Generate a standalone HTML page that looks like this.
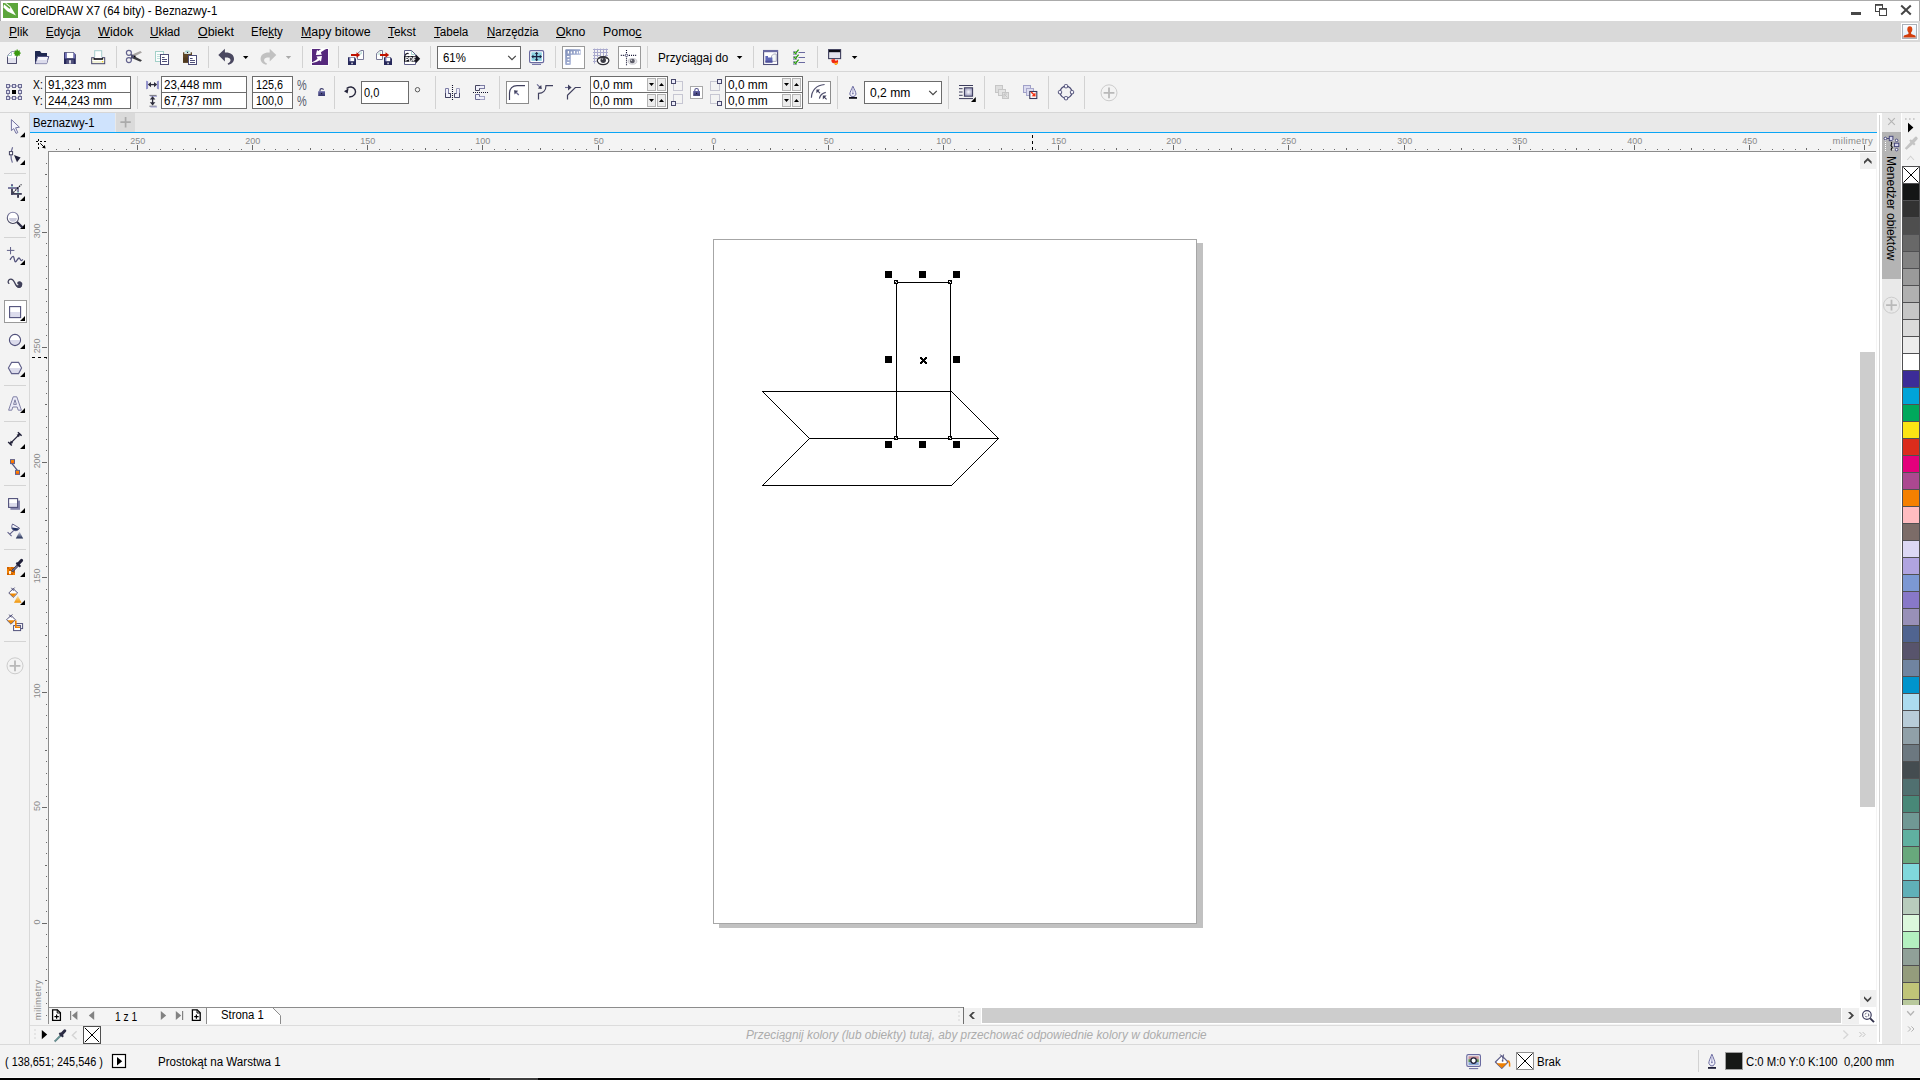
<!DOCTYPE html>
<html>
<head>
<meta charset="utf-8">
<title>CorelDRAW X7</title>
<style>
html,body{margin:0;padding:0;}
body{width:1920px;height:1080px;overflow:hidden;background:#f3f3f3;font-family:"Liberation Sans",sans-serif;font-size:12px;color:#000;}
#root{position:absolute;left:0;top:0;width:1920px;height:1080px;overflow:hidden;background:#f3f3f3;}
.a{position:absolute;}
.t{position:absolute;white-space:nowrap;line-height:16px;height:16px;transform-origin:0 0;}
.box{position:absolute;background:#fff;border:1px solid #7a7a7a;box-sizing:border-box;}
.vs{position:absolute;width:1px;background:#d2d2d2;}
.hs{position:absolute;height:1px;background:#d2d2d2;}
svg{position:absolute;overflow:visible;}
.rl{font-size:9px;line-height:14px;height:14px;color:#8a8a8a;letter-spacing:-0.1px;}
u{text-decoration:underline;text-decoration-thickness:1px;text-underline-offset:1px;}
</style>
</head>
<body>
<div id="root">
<!-- ===== TITLE BAR ===== -->
<div class="a" style="left:0;top:0;width:1920px;height:21px;background:#fff;"></div>
<div class="a" style="left:0;top:0;width:1920px;height:1px;background:#ababab;"></div>
<div class="a" style="left:0;top:0;width:1px;height:21px;background:#a8a8a8;"></div>
<!-- ===== MENU BAR ===== -->
<div class="a" style="left:0;top:21px;width:1920px;height:21px;background:#d9d9d9;"></div>
<!-- ===== STANDARD TOOLBAR ===== -->
<div class="a" style="left:0;top:42px;width:1920px;height:29px;background:#f3f3f3;"></div>
<div class="hs" style="left:0;top:71px;width:1920px;background:#d6d6d6;"></div>
<!-- ===== PROPERTY BAR ===== -->
<div class="a" style="left:0;top:72px;width:1920px;height:40px;background:#f3f3f3;"></div>
<div class="hs" style="left:0;top:112px;width:1920px;background:#d6d6d6;"></div>
<!-- ===== TOOLBOX ===== -->
<div class="a" style="left:0;top:113px;width:29px;height:931px;background:#f3f3f3;"></div>
<div class="vs" style="left:29px;top:113px;height:931px;background:#d8d8d8;"></div>
<!-- ===== TAB BAR ===== -->
<div class="a" style="left:30px;top:113px;width:1847px;height:19px;background:#e9e9e9;"></div>
<div class="a" style="left:30px;top:113px;width:85px;height:19px;background:#cfe3fd;"></div>
<div class="a" style="left:116px;top:113px;width:19px;height:19px;background:#dadada;"></div>
<div class="a" style="left:30px;top:132px;width:1847px;height:1px;background:#0aa5f5;"></div>
<!-- ===== RULER BG ===== -->
<div class="a" style="left:30px;top:133px;width:1847px;height:892px;background:#f4f4f4;"></div>
<!-- title bar icons -->
<div class="a" style="left:1919px;top:1px;width:1px;height:20px;background:#a8a8a8;"></div>
<svg style="left:3px;top:3px;" width="15" height="15" viewBox="0 0 15 15">
<rect x="0" y="0" width="15" height="15" fill="#5ba53b"/>
<path d="M1.2 0.6 L3.6 0.3 L7.6 3.4 L13 12.6 L4.6 8.6 L0.4 4.4 Z" fill="#fff"/>
<path d="M1.6 0.9 L6.6 4.9" stroke="#5ba53b" stroke-width="1.5" fill="none" stroke-linecap="round"/>
</svg>
<div class="a" style="left:1851px;top:12px;width:10px;height:3px;background:#474747;"></div>
<svg style="left:1870px;top:0px;" width="50" height="21" viewBox="1870 0 50 21">
<g fill="#fff" stroke="#444" stroke-width="1">
<rect x="1875.5" y="5" width="7" height="6.5"/><rect x="1875" y="4" width="8" height="1.6" fill="#444" stroke="none"/>
<rect x="1879.5" y="9" width="7" height="6.5"/><rect x="1879" y="8" width="8" height="1.6" fill="#444" stroke="none"/>
</g>
<path d="M1901.2 5.4 L1910.8 14.4 M1910.8 5.4 L1901.2 14.4" stroke="#444" stroke-width="2" fill="none"/>
</svg>
<!-- user icon -->
<div class="a" style="left:1901px;top:23px;width:17px;height:17px;background:#fff;"></div>
<svg style="left:1902px;top:24px;" width="15" height="15" viewBox="0 0 15 15">
<defs><linearGradient id="ug" x1="0" y1="0" x2="0" y2="1"><stop offset="0" stop-color="#fdfdff"/><stop offset="1" stop-color="#dcecfa"/></linearGradient></defs>
<rect x="0.5" y="0.5" width="14" height="14" fill="url(#ug)" stroke="#a9b0b8" stroke-width="1"/>
<ellipse cx="7.8" cy="5.4" rx="2.5" ry="3.1" fill="#d9430f"/>
<path d="M6.6 7.5 L9 7.5 L9.2 10 L13.2 11.6 L14 13.6 L1.2 13.6 L2 11.6 L6.4 10 Z" fill="#d23d0c"/>
</svg>
<!-- ===== CANVAS ===== -->
<div class="a" style="left:48px;top:151px;width:1828px;height:857px;background:#8c8c8c;"></div>
<div class="a" style="left:49px;top:152px;width:1827px;height:855px;background:#fff;"></div>
<!-- page shadow + page -->
<div class="a" style="left:1197px;top:243px;width:6px;height:685px;background:#c1c1c1;"></div>
<div class="a" style="left:719px;top:924px;width:484px;height:4px;background:#c1c1c1;"></div>
<div class="a" style="left:713px;top:239px;width:484px;height:685px;background:#fff;border:1px solid #a6a6a6;box-sizing:border-box;"></div>
<!-- drawing -->
<svg style="left:0;top:0;" width="1920" height="1080" viewBox="0 0 1920 1080" shape-rendering="crispEdges">
<g fill="none" stroke="#000" stroke-width="1">
<path d="M762.5 391.5 L951.5 391.5 L998.5 438.5 L809.5 438.5 Z"/>
<path d="M809.5 438.5 L762.5 485.5 L951.5 485.5 L998.5 438.5"/>
<rect x="896.5" y="282.5" width="54" height="156"/>
</g>
<g fill="#000">
<rect x="885" y="271" width="7" height="7"/><rect x="919" y="271" width="7" height="7"/><rect x="953" y="271" width="7" height="7"/>
<rect x="885" y="356" width="7" height="7"/><rect x="953" y="356" width="7" height="7"/>
<rect x="885" y="441" width="7" height="7"/><rect x="919" y="441" width="7" height="7"/><rect x="953" y="441" width="7" height="7"/>
</g>
<g fill="#fff" stroke="#000" stroke-width="1">
<rect x="894.5" y="280.5" width="3" height="3"/><rect x="948.5" y="280.5" width="3" height="3"/>
<rect x="894.5" y="436.5" width="3" height="3"/><rect x="948.5" y="436.5" width="3" height="3"/>
</g>
<path d="M895 283L897 281M949 283L951 281M895 439L897 437M949 439L951 437" stroke="#000" stroke-width="0.8" shape-rendering="auto"/>
<path d="M920 357h2v1h1v1h1v-1h1v-1h2v2h-1v1h-1v1h1v1h1v2h-2v-1h-1v-1h-1v1h-1v1h-2v-2h1v-1h1v-1h-1v-1h-1z" fill="#000"/>
</svg>
<!-- ===== VERTICAL SCROLLBAR ===== -->
<div class="a" style="left:1860px;top:153px;width:16px;height:16px;background:#f0f0f0;"></div>
<div class="a" style="left:1860px;top:990px;width:16px;height:17px;background:#f0f0f0;"></div>
<div class="a" style="left:1860px;top:352px;width:15px;height:455px;background:#cdcdcd;"></div>
<!-- ===== NAV BAR / HSCROLL ===== -->
<div class="a" style="left:49px;top:1008px;width:914px;height:16px;background:#f4f4f4;"></div>
<div class="a" style="left:963px;top:1007px;width:1px;height:17px;background:#707070;"></div>
<div class="a" style="left:48px;top:1008px;width:1px;height:16px;background:#8c8c8c;"></div>
<div class="a" style="left:964px;top:1007px;width:912px;height:17px;background:#fff;"></div>
<div class="a" style="left:964px;top:1008px;width:17px;height:16px;background:#f0f0f0;"></div>
<div class="a" style="left:1842px;top:1008px;width:17px;height:16px;background:#f0f0f0;"></div>
<div class="a" style="left:982px;top:1008px;width:859px;height:15px;background:#cdcdcd;"></div>
<div class="a" style="left:30px;top:1024px;width:1847px;height:1px;background:#f4f4f4;"></div>
<div class="hs" style="left:30px;top:1025px;width:1847px;background:#dcdcdc;"></div>
<div class="a" style="left:30px;top:1026px;width:1847px;height:18px;background:#f4f4f4;"></div>
<!-- page tab -->
<svg style="left:0;top:0;" width="1920" height="1080" viewBox="0 0 1920 1080">
<path d="M206.5 1024 L206.5 1008 L273 1008 L280.5 1015.5 L280.5 1024 Z" fill="#fff" stroke="none"/>
<path d="M206.5 1024 L206.5 1007.5 M273 1008 L280.5 1015.5 L280.5 1024" fill="none" stroke="#8c8c8c" stroke-width="1"/>
</svg>
<!-- ===== STANDARD TOOLBAR ICONS ===== -->
<div class="vs" style="left:116px;top:46px;height:22px;"></div>
<div class="vs" style="left:208px;top:46px;height:22px;"></div>
<div class="vs" style="left:302px;top:46px;height:22px;"></div>
<div class="vs" style="left:338px;top:46px;height:22px;"></div>
<div class="vs" style="left:430px;top:46px;height:22px;"></div>
<div class="vs" style="left:555px;top:46px;height:22px;"></div>
<div class="vs" style="left:647px;top:46px;height:22px;"></div>
<div class="vs" style="left:753px;top:46px;height:22px;"></div>
<div class="vs" style="left:817px;top:46px;height:22px;"></div>
<div class="box" style="left:437px;top:46px;width:84px;height:23px;border-color:#6c6c6c;"></div>
<div class="box" style="left:562px;top:46px;width:23px;height:23px;border-color:#9a9a9a;"></div>
<div class="box" style="left:618px;top:46px;width:23px;height:23px;border-color:#9a9a9a;"></div>
<svg style="left:0;top:0;" width="900" height="72" viewBox="0 0 900 72">
<!-- new -->
<path d="M7.5 55.5 L11.5 51.5 L16.5 51.5 L16.5 63.5 L7.5 63.5 Z" fill="#fff" stroke="#9a9ab4" stroke-width="1"/>
<path d="M8 58 H16 V63 H8 Z" fill="#e2e2ee"/>
<path d="M7.5 57 V63.5 H16.5 V57" fill="none" stroke="#4c4c6c" stroke-width="1"/>
<path d="M8 55.5 H11.5 V52" fill="none" stroke="#a8d0cc" stroke-width="1"/>
<circle cx="17.2" cy="53.1" r="2.7" fill="#3a9a10"/>
<path d="M17.2 49.6 V56.6 M13.7 53.1 H20.7 M14.8 50.7 L19.6 55.5 M19.6 50.7 L14.8 55.5" stroke="#3a9a10" stroke-width="1.2"/>
<!-- open -->
<path d="M35 51.5 Q35 51 35.5 51 H40 L41.5 53 H47 V56 H35 Z" fill="#1f2850"/>
<path d="M35 55 H38 V64 H35 Z" fill="#1f2850"/>
<path d="M37.6 56.5 H48.8 L46.6 63.6 H35.4 Z" fill="#f4f4fa" stroke="#505080" stroke-width="1"/>
<path d="M37 60 H47.6 L46.6 63.4 H36 Z" fill="#dcdcec"/>
<!-- save -->
<path d="M64 52.3 H73.6 L75.8 54.5 V64 H64 Z" fill="#26285a"/>
<path d="M64.8 53 H66.8 V58.5 H64.8 Z M73.3 53 H74.9 V58.5 H73.3 Z" fill="#7474bc"/>
<rect x="66.8" y="52.8" width="6.5" height="5.4" fill="#fff"/>
<rect x="66.3" y="59.6" width="7.4" height="4.4" fill="#54547e"/>
<rect x="69.2" y="60.2" width="1.6" height="3.4" fill="#fff"/>
<!-- print -->
<rect x="94.7" y="50.7" width="7" height="8" fill="#fff" stroke="#a4cccc" stroke-width="1"/>
<rect x="91.7" y="57.7" width="13" height="6" fill="#f2f2d6" stroke="#45456c" stroke-width="1"/>
<rect x="93.6" y="58" width="9.3" height="1.8" fill="#10101c"/>
<rect x="94.6" y="57" width="7.2" height="1.2" fill="#fff"/>
<rect x="92.3" y="60" width="11.8" height="1" fill="#fff"/>
<rect x="102" y="61" width="1.2" height="1.2" fill="#f0d020"/>
<!-- cut -->
<path d="M131.5 58 L142 52.6 L140.4 51 L131 55 Z" fill="#a9a6a4"/>
<path d="M131.5 54.8 L142 60.2 L140.4 61.8 L131 57.8 Z" fill="#3c3c40"/>
<circle cx="128.9" cy="52.8" r="2.5" fill="none" stroke="#62628e" stroke-width="1.2"/>
<circle cx="128.9" cy="60.1" r="2.5" fill="none" stroke="#62628e" stroke-width="1.2"/>
<path d="M130.8 54.6 L134.4 56.6 M130.8 58.3 L134.4 56.2" stroke="#4c4c70" stroke-width="1.4"/>
<circle cx="134.8" cy="56.4" r="0.8" fill="#000"/>
<!-- copy -->
<rect x="155.5" y="51.5" width="8" height="10" fill="#fbfdfd" stroke="#a2d0c8" stroke-width="1"/>
<path d="M157 54.5 H162 M157 56.5 H162 M157 58.5 H162" stroke="#bfe0da" stroke-width="1"/>
<rect x="160.5" y="54.5" width="8" height="10" fill="#fff" stroke="#4e4e78" stroke-width="1"/>
<path d="M162 57.5 H164.6 M162 59.5 H167 M162 61.5 H167" stroke="#4e4e78" stroke-width="1"/>
<!-- paste -->
<rect x="183" y="52.3" width="9" height="10.4" fill="#5e4626"/>
<rect x="183" y="57.5" width="9" height="5.2" fill="#503a1e"/>
<path d="M184.4 53.6 L185.6 50.6 L189.4 50.6 L190.6 53.6 Z" fill="#a8d8d0"/>
<rect x="184.3" y="52.2" width="6.4" height="1.6" fill="#e8f4f2"/>
<circle cx="187.5" cy="52.4" r="0.7" fill="#202040"/>
<rect x="188.5" y="55.5" width="8" height="9" fill="#fff" stroke="#4e4e78" stroke-width="1"/>
<path d="M190 58.5 H192.6 M190 60.5 H195 M190 62.5 H195" stroke="#4e4e78" stroke-width="1"/>
<!-- undo -->
<path d="M218.3 55.1 L224.9 48.8 L224.9 52.6 C230 52.2 234 54.6 234 59 C234 62 231.5 64.3 228.2 64.7 L227.6 63.5 C229.8 62.8 230.9 61.3 230.4 59.6 C229.8 57.9 227.8 57.4 224.9 57.6 L224.9 61.6 Z" fill="#4a4860"/>
<path d="M243 56 H248.4 L245.7 59 Z" fill="#000"/>
<!-- redo -->
<path d="M276.3 55.1 L269.7 48.8 L269.7 52.6 C264.6 52.2 260.6 54.6 260.6 59 C260.6 62 263.1 64.3 266.4 64.7 L267 63.5 C264.8 62.8 263.7 61.3 264.2 59.6 C264.8 57.9 266.8 57.4 269.7 57.6 L269.7 61.6 Z" fill="#c1c1c1"/>
<path d="M285.8 56 H291.2 L288.5 59 Z" fill="#a9a9a9"/>
<!-- corel connect purple -->
<rect x="311" y="48" width="18" height="18" fill="#fcfcfc"/>
<rect x="312" y="49" width="16" height="16" fill="#55287c"/>
<path d="M315.9 55 L317 49.9 L318.4 50.9 C319.4 50 320.2 49.5 321.2 49.1 L326.3 49 C324 50 322.2 51.2 320.8 52.5 L321.8 54.8 Z" fill="#fff"/>
<path d="M322 56 L316.5 56.6 L317.6 58.4 C316 60.2 314.2 61.4 312 62.2 L312 63.1 C315 62.6 317.4 61.8 319.4 60.3 L321 61.6 Z" fill="#fff"/>
<!-- import -->
<path d="M357.5 53.5 L361 50.5 H363.5 V59.5 H357.5 Z" fill="#fff" stroke="#7a7a98" stroke-width="1"/>
<path d="M358.5 54 H361.2 V51.4" fill="none" stroke="#a8d4cc" stroke-width="1"/>
<path d="M348 57.3 H354.6 L356 58.7 V65 H348 Z" fill="#26285a"/>
<rect x="349.6" y="57.6" width="4.6" height="3.6" fill="#fff"/>
<rect x="349.4" y="58" width="1" height="3" fill="#7474bc"/>
<rect x="351.4" y="62.6" width="1.3" height="1.6" fill="#fff"/>
<path d="M351 54 H356.5 V52.2 L360.2 55 L356.5 57.8 V56 H351 Z" fill="#c01200"/>
<!-- export -->
<path d="M376.5 53.5 L380 50.5 H382.5 V59.5 H376.5 Z" fill="#fff" stroke="#7a7a98" stroke-width="1"/>
<path d="M377.5 54 H380.2 V51.4" fill="none" stroke="#a8d4cc" stroke-width="1"/>
<path d="M384 57.3 H390.6 L392 58.7 V65 H384 Z" fill="#26285a"/>
<rect x="385.6" y="57.6" width="4.6" height="3.6" fill="#fff"/>
<rect x="385.4" y="58" width="1" height="3" fill="#7474bc"/>
<rect x="387.4" y="62.6" width="1.3" height="1.6" fill="#fff"/>
<path d="M380 54 H385.5 V52.2 L389.2 55 L385.5 57.8 V56 H380 Z" fill="#c01200"/>
<!-- pdf -->
<path d="M404.5 50.5 H411.5 L415.5 54.5 V64.5 H404.5 Z" fill="#fff" stroke="#5c5c84" stroke-width="1"/>
<path d="M411.5 51 V54.5 H415" fill="none" stroke="#a8d4cc" stroke-width="1"/>
<path d="M404 56 H416 V54.4 L420.2 58.8 L416 63.2 V61.8 H404 Z" fill="#14141e"/>
<path d="M405 55.6 C405.6 53.8 407 53.2 408.6 53.6" fill="none" stroke="#14141e" stroke-width="1.2"/>
<path d="M405.9 61.3 V57.3 H407.3 Q408.4 57.3 408.4 58.4 Q408.4 59.5 407.3 59.5 H405.9 M409.7 57.3 V61.3 H410.8 Q412.3 61.3 412.3 59.3 Q412.3 57.3 410.8 57.3 Z M413.7 61.3 V57.3 H415.7 M413.7 59.3 H415.3" fill="none" stroke="#fff" stroke-width="1.1"/>
<!-- zoom chevron -->
<path d="M508.2 55.8 L512 59.6 L515.8 55.8" fill="none" stroke="#444" stroke-width="1.2"/>
<!-- full screen -->
<rect x="529.6" y="50.6" width="14" height="12" rx="1.4" fill="#fff" stroke="#6a6aa0" stroke-width="1.2"/>
<rect x="531.4" y="52.3" width="10.4" height="8.6" fill="#8cd2e2"/>
<path d="M532 56.6 H541.2 M536.6 52.6 V60.6" stroke="#1c2040" stroke-width="1.3"/>
<path d="M536.6 51.9 L538.4 54 H534.8 Z M536.6 61.3 L538.4 59.2 H534.8 Z M531.3 56.6 L533.4 54.8 V58.4 Z M541.9 56.6 L539.8 54.8 V58.4 Z" fill="#1c2040"/>
<path d="M532 64.4 H541" stroke="#7070a4" stroke-width="1.1"/>
<!-- rulers -->
<defs><linearGradient id="rg" x1="0" y1="0" x2="1" y2="1"><stop offset="0" stop-color="#7c8cb6"/><stop offset="0.6" stop-color="#a4b0d4"/><stop offset="1" stop-color="#c4cce6"/></linearGradient></defs>
<path d="M565.2 50.2 Q565.2 49.3 566.2 49.3 H579.8 Q580.7 49.3 580.7 50.2 V54.8 H570.8 V64 Q570.8 64.9 569.9 64.9 H566.2 Q565.2 64.9 565.2 64 Z" fill="url(#rg)"/>
<path d="M568.4 51 V53.6 M571.4 51.6 V53.6 M574.4 51 V53.6 M577.4 51.6 V53.6 M579.6 51 V53.6" stroke="#fff" stroke-width="1.3"/>
<path d="M567 56.6 H569.4 M567.6 59.6 H569.4 M567 62.6 H569.4" stroke="#fff" stroke-width="1.3"/>
<!-- grid eye -->
<path d="M594.5 48.6 V63.6 M597.5 48.6 V57.4 M600.5 48.6 V56.4 M603.5 48.6 V56 M606.5 48.6 V56.4 M593 49.5 H608 M593 52.5 H608 M593 55.5 H600 M605 55.5 H608 M593 58.5 H597 M593 61.5 H596.6" stroke="#aaaace" stroke-width="1"/>
<ellipse cx="603.1" cy="60.6" rx="5.8" ry="4" fill="#fafafa" stroke="#2a2a32" stroke-width="1.2"/>
<path d="M597.3 60 C598.4 57.2 600.6 56.2 603.1 56.2 C605.6 56.2 607.8 57.2 608.9 60 C607 58.4 605 58 603.1 58 C601.2 58 599.2 58.4 597.3 60 Z" fill="#34343c"/>
<circle cx="603.2" cy="60.2" r="2.7" fill="#3c3c46"/>
<path d="M601.4 58.6 H603.4 L602.4 60 Z" fill="#ececec"/>
<!-- guide eye -->
<path d="M626.5 50 V65.4" stroke="#101030" stroke-width="1.1" stroke-dasharray="1 1.05"/>
<path d="M620.8 55.4 H636.6" stroke="#101030" stroke-width="1.1" stroke-dasharray="1 1.05"/>
<rect x="625.4" y="54.3" width="2.2" height="2.2" fill="#fff" stroke="#34345c" stroke-width="0.8" transform="rotate(45 626.5 55.4)"/>
<ellipse cx="632.5" cy="61.3" rx="4.3" ry="2.9" fill="#e6e6ea" stroke="#c0c0c8" stroke-width="0.8"/>
<ellipse cx="632.3" cy="61" rx="2.5" ry="2.2" fill="#5c5c68"/>
<circle cx="631.4" cy="60.3" r="0.8" fill="#d8d8dc"/>
<!-- snap dropdown -->
<path d="M736.8 56 H742.4 L739.6 59.1 Z" fill="#000"/>
<!-- welcome screen -->
<rect x="763.6" y="50.5" width="14" height="14" fill="#fff" stroke="#4e4e78" stroke-width="1.1"/>
<rect x="763.2" y="50" width="14.8" height="2.2" fill="#6a6aa2"/>
<path d="M771.5 56 L773.5 54 H776.3 V61.4 H771.5 Z" fill="#f4f8f8" stroke="#9a9ab4" stroke-width="0.8"/>
<path d="M765.4 56 H768 V57.6 H772.4 V62.6 H765.4 Z" fill="#6068b8"/>
<rect x="765.4" y="60.6" width="7" height="2" fill="#505098"/>
<!-- options -->
<g stroke="#6a6aa0" stroke-width="1" fill="#fff">
<rect x="793.5" y="51.5" width="3" height="3" stroke="#a4a4c0"/><rect x="793.5" y="56.5" width="3" height="3" stroke="#a4a4c0"/><rect x="793.5" y="61.5" width="3" height="3" stroke="#a4a4c0"/>
<path d="M798.5 52.5 H805 M798.5 57.5 H805 M798.5 62.5 H805" fill="none"/>
</g>
<path d="M794 52 L795.4 53.6 L798.6 49.6 M794 57 L795.4 58.6 L798.6 54.6 M794 62 L795.4 63.6 L798.6 59.6" stroke="#2ea010" stroke-width="1.3" fill="none"/>
<!-- launcher -->
<rect x="828.6" y="49.6" width="12" height="9" fill="#e2e2ea" stroke="#40405e" stroke-width="1.1"/>
<rect x="829" y="50" width="11.2" height="2.2" fill="#0c0c14"/>
<path d="M831.4 59.4 C831 62 832.6 63.6 834.6 63 C834.2 64 834.8 64.8 835.8 64.9 C838 64.4 838.8 62 837.6 59.4 C837 60.6 836 61 835.2 60.6 C834.6 60 834.8 59.4 835 59 Z" fill="#f02810"/>
<path d="M834.4 62.6 C834.6 64 835.2 64.9 836.2 64.9 C837.4 64.4 837.8 63.2 837.6 62 C836.6 63 835.4 63.2 834.4 62.6 Z" fill="#ffc020"/>
<path d="M851.8 56 H857.4 L854.6 59.1 Z" fill="#000"/>
</svg>
<!-- ===== PROPERTY BAR ===== -->
<div class="vs" style="left:137px;top:76px;height:33px;"></div>
<div class="vs" style="left:334px;top:76px;height:33px;"></div>
<div class="vs" style="left:435px;top:76px;height:33px;"></div>
<div class="vs" style="left:499px;top:76px;height:33px;"></div>
<div class="vs" style="left:837px;top:76px;height:33px;"></div>
<div class="vs" style="left:948px;top:76px;height:33px;"></div>
<div class="vs" style="left:984px;top:76px;height:33px;"></div>
<div class="vs" style="left:1048px;top:76px;height:33px;"></div>
<div class="vs" style="left:1084px;top:76px;height:33px;"></div>
<div class="box" style="left:45px;top:76px;width:86px;height:17px;border-color:#6c6c6c;"></div>
<div class="box" style="left:45px;top:92px;width:86px;height:17px;border-color:#6c6c6c;"></div>
<div class="box" style="left:161px;top:76px;width:86px;height:17px;border-color:#6c6c6c;"></div>
<div class="box" style="left:161px;top:92px;width:86px;height:17px;border-color:#6c6c6c;"></div>
<div class="box" style="left:252px;top:76px;width:41px;height:17px;border-color:#6c6c6c;"></div>
<div class="box" style="left:252px;top:92px;width:41px;height:17px;border-color:#6c6c6c;"></div>
<div class="box" style="left:361px;top:81px;width:48px;height:23px;border-color:#6c6c6c;"></div>
<div class="box" style="left:506px;top:81px;width:23px;height:23px;border-color:#8c8c8c;"></div>
<div class="box" style="left:590px;top:76px;width:78px;height:17px;border-color:#6c6c6c;"></div>
<div class="box" style="left:590px;top:92px;width:78px;height:17px;border-color:#6c6c6c;"></div>
<div class="box" style="left:725px;top:76px;width:78px;height:17px;border-color:#6c6c6c;"></div>
<div class="box" style="left:725px;top:92px;width:78px;height:17px;border-color:#6c6c6c;"></div>
<div class="box" style="left:690px;top:86px;width:13px;height:13px;border-color:#a8a8a8;"></div>
<div class="box" style="left:808px;top:81px;width:23px;height:23px;border-color:#8c8c8c;"></div>
<div class="box" style="left:864px;top:81px;width:78px;height:23px;border-color:#6c6c6c;"></div>
<!-- spin buttons -->
<div class="box" style="left:647px;top:78px;width:9px;height:13px;background:#ececec;border-color:#b4b4b4;"></div>
<div class="box" style="left:657px;top:78px;width:9px;height:13px;background:#ececec;border-color:#b4b4b4;"></div>
<div class="box" style="left:647px;top:94px;width:9px;height:13px;background:#ececec;border-color:#b4b4b4;"></div>
<div class="box" style="left:657px;top:94px;width:9px;height:13px;background:#ececec;border-color:#b4b4b4;"></div>
<div class="box" style="left:782px;top:78px;width:9px;height:13px;background:#ececec;border-color:#b4b4b4;"></div>
<div class="box" style="left:792px;top:78px;width:9px;height:13px;background:#ececec;border-color:#b4b4b4;"></div>
<div class="box" style="left:782px;top:94px;width:9px;height:13px;background:#ececec;border-color:#b4b4b4;"></div>
<div class="box" style="left:792px;top:94px;width:9px;height:13px;background:#ececec;border-color:#b4b4b4;"></div>
<svg style="left:0;top:72px;" width="1130" height="41" viewBox="0 72 1130 41">
<!-- origin grid -->
<g fill="#dedef0" stroke="#6c6c94" stroke-width="1">
<path d="M8 86 H20 V98 H8 Z" fill="none"/>
<rect x="6.5" y="84.5" width="3" height="3"/><rect x="12.5" y="84.5" width="3" height="3"/><rect x="18.5" y="84.5" width="3" height="3"/>
<rect x="6.5" y="90.5" width="3" height="3"/><rect x="18.5" y="90.5" width="3" height="3"/>
<rect x="6.5" y="96.5" width="3" height="3"/><rect x="12.5" y="96.5" width="3" height="3"/><rect x="18.5" y="96.5" width="3" height="3"/>
</g>
<rect x="12" y="90" width="4" height="4" fill="#000"/>
<!-- width icon -->
<path d="M146.6 81 L147.6 81.6 V88.4 L146.6 89 Z M158.4 81 L157.4 81.6 V88.4 L158.4 89 Z" fill="#8484c4" stroke="#8484c4" stroke-width="0.8"/>
<path d="M149 84.6 H156" stroke="#2c2c3c" stroke-width="1.3"/>
<path d="M147.8 84.6 L151 82 V87.2 Z M157.2 84.6 L154 82 V87.2 Z" fill="#2c2c3c"/>
<!-- height icon -->
<path d="M149.4 95.4 H156.6 M149.4 106.2 H156.6" stroke="#707078" stroke-width="1"/>
<path d="M150.4 96.4 H157 M150.4 107 H157" stroke="#9c9cd4" stroke-width="0.9"/>
<path d="M152.6 98 V104" stroke="#2c2c3c" stroke-width="1.3"/>
<path d="M152.6 96.2 L155.4 99.6 H149.8 Z M152.6 105.6 L155.4 102.2 H149.8 Z" fill="#2c2c3c"/>
<!-- open lock -->
<defs><linearGradient id="lk" x1="0" y1="0" x2="0" y2="1"><stop offset="0" stop-color="#6666a6"/><stop offset="1" stop-color="#34346a"/></linearGradient></defs>
<rect x="318.2" y="91.2" width="6.8" height="4.8" fill="url(#lk)"/>
<path d="M320 91.2 V90 C320 88.4 323.4 88.2 323.4 89.8" fill="none" stroke="#3c3c6c" stroke-width="1.2"/>
<rect x="321.1" y="93" width="1" height="1.2" fill="#16162c"/>
<!-- rotate -->
<path d="M346.6 88.6 C349.4 86 353.4 86.6 355 89.6 C356.6 92.8 354.6 96.6 349.2 97" fill="none" stroke="#24243a" stroke-width="1.4"/>
<path d="M344 91.2 L348.6 88.2 L347.6 93.4 Z" fill="#24243a"/>
<circle cx="417.5" cy="89.7" r="2.2" fill="none" stroke="#5a5a5a" stroke-width="1"/>
<!-- mirror h -->
<path d="M445.5 88.5 H448.5 V93.5 H450.5 V97.5 H445.5 Z" fill="#f0f0fa" stroke="#7c7ca4" stroke-width="1"/>
<path d="M445.5 93 V97.5 H450.5 V93.5 H448.5" fill="none" stroke="#40405e" stroke-width="1"/>
<path d="M459.5 88.5 H456.5 V93.5 H454.5 V97.5 H459.5 Z" fill="#f0f0fa" stroke="#9c9cbc" stroke-width="1"/>
<path d="M459.5 93 V97.5 H454.5 V93.5 H456.5" fill="none" stroke="#50506e" stroke-width="1"/>
<path d="M452.5 85 V100" stroke="#10102a" stroke-width="1.1" stroke-dasharray="1 1"/>
<!-- mirror v -->
<path d="M475.5 85.5 H484.5 V88.5 H479.5 V90.5 H475.5 Z" fill="#f0f0fa" stroke="#44445e" stroke-width="1"/>
<path d="M480 85.5 H484.5 V88.5 H480" fill="none" stroke="#7c7ca4" stroke-width="1"/>
<path d="M475.5 99.5 H484.5 V96.5 H479.5 V94.5 H475.5 Z" fill="#f0f0fa" stroke="#6c6c94" stroke-width="1"/>
<path d="M480 99.5 H484.5 V96.5 H480" fill="none" stroke="#a4a4c4" stroke-width="1"/>
<path d="M473 92.5 H488" stroke="#10102a" stroke-width="1.1" stroke-dasharray="1 1"/>
<!-- round corner -->
<path d="M509.5 100 V93 C509.5 88.6 512.6 85.6 517 85.6 H525" fill="none" stroke="#40405e" stroke-width="1.2"/>
<path d="M514 90.2 L518.2 90.8 L514.6 94.4 Z" fill="#40405e"/>
<path d="M516 92.2 L518.8 95" stroke="#6c6c94" stroke-width="1.3"/>
<!-- scallop -->
<path d="M538.5 99.6 V93.4 C543 93.4 546 90.4 546 85.6 H553" fill="none" stroke="#40405e" stroke-width="1.2"/>
<path d="M537 84.4 L540.4 87.6" stroke="#6c6c94" stroke-width="1.2"/>
<path d="M541.8 89 L537.8 88.4 L541.2 85 Z" fill="#40405e"/>
<!-- chamfer -->
<path d="M567.5 99.6 V95.2 L575.3 87.5 H580.8" fill="none" stroke="#40405e" stroke-width="1.2"/>
<path d="M565 87.5 H568.4" stroke="#6c6c94" stroke-width="1.1"/>
<path d="M571.6 87.5 L568 84.6 V90.4 Z" fill="#40405e"/>
<!-- spin triangles -->
<g fill="#000">
<path d="M649 83 H654 L651.5 86 Z M659 86 H664 L661.5 83 Z M649 99 H654 L651.5 102 Z M659 102 H664 L661.5 99 Z"/>
<path d="M784 83 H789 L786.5 86 Z M794 86 H799 L796.5 83 Z M784 99 H789 L786.5 102 Z M794 102 H799 L796.5 99 Z"/>
</g>
<!-- corner link indicators -->
<g fill="none" stroke="#c6c6d2" stroke-width="1">
<rect x="673.5" y="81.5" width="9" height="9"/><rect x="673.5" y="94.5" width="9" height="9"/>
<rect x="710.5" y="81.5" width="9" height="9"/><rect x="710.5" y="94.5" width="9" height="9"/>
</g>
<g fill="#ececfa" stroke="#48486a" stroke-width="1">
<rect x="671.5" y="79.5" width="4" height="4"/><rect x="671.5" y="101.5" width="4" height="4"/>
<rect x="717.5" y="79.5" width="4" height="4"/><rect x="717.5" y="101.5" width="4" height="4"/>
</g>
<!-- closed lock -->
<rect x="693.2" y="91" width="6.8" height="4.9" fill="url(#lk)"/>
<path d="M694.8 91 V90.2 C694.8 88 698.4 88 698.4 90.2 V91" fill="none" stroke="#54548c" stroke-width="1.1"/>
<rect x="696.1" y="92.8" width="1" height="1.2" fill="#16162c"/>
<!-- relative corner -->
<path d="M811.4 97.8 C811.6 90.6 816.4 85 824.6 84.5" fill="none" stroke="#50506e" stroke-width="1.2"/>
<path d="M819.4 98.6 C820 95.2 822.4 93 825.8 92.3" fill="none" stroke="#50506e" stroke-width="1.2"/>
<path d="M816.4 89.6 H820 L816.4 93.2 Z M822.8 95.6 H826.6 L822.8 99.4 Z" fill="#40405e"/>
<path d="M817.6 90.8 L820 93.2 M824 96.8 L826.6 99.4" stroke="#40405e" stroke-width="1.1"/>
<!-- pen nib -->
<path d="M852.9 86.2 C851.6 89 849.8 92.4 849.8 94.2 L851.6 96.6 H854.2 L856 94.2 C856 92.4 854.2 89 852.9 86.2 Z" fill="#f0f0fa" stroke="#6a6aa0" stroke-width="1"/>
<path d="M852.9 88 V93.2" stroke="#9c9cc4" stroke-width="0.9"/>
<circle cx="852.9" cy="93.6" r="0.8" fill="#6a6aa0"/>
<rect x="849" y="97" width="8" height="1.8" fill="#10101c"/>
<!-- combobox chevron -->
<path d="M929.2 90.8 L933 94.6 L936.8 90.8" fill="none" stroke="#444" stroke-width="1.2"/>
<!-- wrap -->
<defs><radialGradient id="wg" cx="0.5" cy="0.5" r="0.6"><stop offset="0" stop-color="#fafaff"/><stop offset="1" stop-color="#8c8cb0"/></radialGradient></defs>
<path d="M959 85.5 H973 M959 88.7 H962.6 M959 92 H962.6 M959 95.3 H962.6 M959 98.6 H973" stroke="#3c3c5c" stroke-width="1"/>
<rect x="964.4" y="87.8" width="8.2" height="8.4" fill="url(#wg)" stroke="#38385a" stroke-width="1"/>
<path d="M975.8 97 V102 H971 Z" fill="#000"/>
<!-- disabled combine -->
<g fill="#dedede" stroke="#c6c6c6" stroke-width="1">
<rect x="995.5" y="85.5" width="7" height="7"/><rect x="998.5" y="89.5" width="7" height="6" fill="#e4e4e4"/><rect x="1002.5" y="92.5" width="6" height="6" fill="#e0e0e0"/>
</g>
<path d="M1004 94 V97.4 M1004 94 H1007 M1004 94 L1007.4 97.4" stroke="#c4c4c4" stroke-width="1" fill="none"/>
<!-- convert -->
<rect x="1023.5" y="85.5" width="7" height="7" fill="#dcdcf0" stroke="#a0a0c8" stroke-width="1"/>
<rect x="1026.5" y="88.5" width="7" height="7" fill="#dcdcf0" stroke="#a8a8cc" stroke-width="1"/>
<rect x="1029.8" y="91.5" width="7" height="7" fill="#fff" stroke="#38385a" stroke-width="1.1"/>
<path d="M1031.2 92 L1034 94.8" stroke="#f03010" stroke-width="1.4"/>
<path d="M1035.6 96.4 L1031.6 96.2 L1035.4 92.4 Z" fill="#f03010"/>
<!-- bounding circle -->
<circle cx="1066" cy="92.2" r="6" fill="none" stroke="#505078" stroke-width="1.2"/>
<g fill="#f6f6fc" stroke="#505078" stroke-width="1">
<rect x="1064.4" y="84.6" width="3.2" height="3.2" rx="0.8"/><rect x="1064.4" y="96.6" width="3.2" height="3.2" rx="0.8"/>
<rect x="1058.4" y="90.6" width="3.2" height="3.2" rx="0.8"/><rect x="1070.4" y="90.6" width="3.2" height="3.2" rx="0.8"/>
</g>
<!-- plus -->
<circle cx="1109" cy="92.8" r="8" fill="none" stroke="#cccccc" stroke-width="1"/>
<path d="M1103.6 92.8 H1114.4 M1109 87.4 V98.2" stroke="#b9b9b9" stroke-width="1.8"/>
</svg>
<!-- ===== TOOLBOX ===== -->
<div class="hs" style="left:4px;top:173px;width:22px;background:#d4d4d4;"></div>
<div class="hs" style="left:4px;top:237px;width:22px;background:#d4d4d4;"></div>
<div class="hs" style="left:4px;top:385px;width:22px;background:#d4d4d4;"></div>
<div class="hs" style="left:4px;top:421px;width:22px;background:#d4d4d4;"></div>
<div class="hs" style="left:4px;top:485px;width:22px;background:#d4d4d4;"></div>
<div class="hs" style="left:4px;top:549px;width:22px;background:#d4d4d4;"></div>
<div class="hs" style="left:4px;top:641px;width:22px;background:#d4d4d4;"></div>
<div class="box" style="left:4px;top:300px;width:23px;height:23px;border-color:#9a9a9a;"></div>
<svg style="left:0;top:113px;" width="30" height="580" viewBox="0 113 30 580">
<defs>
<linearGradient id="hl" x1="0" y1="0" x2="0" y2="1"><stop offset="0" stop-color="#fff"/><stop offset="0.5" stop-color="#fff"/><stop offset="0.5" stop-color="#dcdcec"/><stop offset="1" stop-color="#dcdcec"/></linearGradient>
<linearGradient id="zs" x1="0" y1="0" x2="0" y2="1"><stop offset="0" stop-color="#8484a8"/><stop offset="1" stop-color="#3c3c54"/></linearGradient>
<linearGradient id="cg" x1="0" y1="0" x2="0" y2="1"><stop offset="0" stop-color="#ff9800"/><stop offset="1" stop-color="#ff5a00"/></linearGradient>
<linearGradient id="tg" x1="0" y1="0" x2="0" y2="1"><stop offset="0" stop-color="#d8dcec"/><stop offset="1" stop-color="#1c2850"/></linearGradient>
<linearGradient id="og" x1="0" y1="0" x2="0" y2="1"><stop offset="0" stop-color="#fde8b0"/><stop offset="1" stop-color="#f09000"/></linearGradient>
</defs>
<!-- flyout triangles -->
<g fill="#000">
<path d="M25 132.2 V137.2 H20 Z M25 160 V165 H20 Z M25 196 V201 H20 Z M25 224 V229 H20 Z M25 260 V265 H20 Z M25 316 V321 H20 Z M25 344 V349 H20 Z M25 372 V377 H20 Z M25 408 V413 H20 Z M25 444 V449 H20 Z M25 472 V477 H20 Z M25 508 V513 H20 Z M25 572 V577 H20 Z M25 600 V605 H20 Z"/>
</g>
<!-- pick -->
<path d="M11.4 119.6 V130.6 L13.8 128.6 L16 133.4 L17.8 132.6 L15.6 127.8 L19.4 127.2 Z" fill="#f4f4fc" stroke="#7272a0" stroke-width="1" stroke-linejoin="round"/>
<!-- shape -->
<path d="M12.6 147.2 C10.6 152 10.6 158 12.4 162.6" fill="none" stroke="#6c6c94" stroke-width="1.2"/>
<rect x="9.4" y="151.6" width="3.2" height="3.2" fill="#fff" stroke="#40405e" stroke-width="1"/>
<path d="M14 155 L20.6 157.4 L17 162.2 Z" fill="#20203a"/>
<!-- crop -->
<rect x="11" y="184.2" width="2" height="2" fill="#606090"/><rect x="11" y="186.1" width="2" height="1" fill="#90d8c8"/>
<rect x="8" y="187.1" width="10.9" height="1.8" fill="#707098"/>
<rect x="17.2" y="188.8" width="1.7" height="3.3" fill="#707098"/><rect x="17.2" y="192" width="1.7" height="1" fill="#90d8c8"/>
<rect x="11.1" y="188.8" width="1.8" height="6" fill="#34344c"/>
<rect x="11.1" y="193" width="10.7" height="1.8" fill="#40405a"/>
<rect x="17.2" y="194.7" width="1.7" height="3.1" fill="#24243c"/>
<path d="M13.2 192.6 L21.4 184.4" stroke="#10101c" stroke-width="1.2" stroke-dasharray="1.8 0.9"/>
<!-- zoom -->
<circle cx="12.9" cy="217.9" r="5.6" fill="#fff" stroke="url(#zs)" stroke-width="1.1"/>
<path d="M9.1 218 H16.9 A3.9 3.7 0 0 1 9.1 218 Z" fill="#cacadc"/>
<path d="M17 222 L22.6 227.6" stroke="#30304a" stroke-width="2.2"/>
<!-- freehand -->
<path d="M10.55 247 V254.3 M6.9 250.4 H14.4" stroke="#606088" stroke-width="1"/>
<path d="M10 259.8 C11.2 258 12.2 256.2 13.2 256.4 C14.4 256.8 14.2 261.6 15.4 261.8 C16.6 261.8 17.8 258 19 258 C20 258 20.4 260.6 21.4 260.6 C22 260.6 22.4 260 22.8 259.4" fill="none" stroke="#50507a" stroke-width="1.3"/>
<!-- artistic media -->
<path d="M8.9 283.4 C7.6 282.4 8 280.2 9.8 279.4 C12 278.6 13.6 280.4 14.6 282.6 C15.6 285 16.6 287.2 18.8 287.4 C21 287.4 22 285.2 21.6 283.2" fill="none" stroke="#40405a" stroke-width="1.3" stroke-linecap="round"/>
<path d="M14.4 282.4 C15.6 285.4 16.8 287.8 19.2 287.9 C22 287.6 22.6 284.4 21.6 282.6 C20.8 281.2 19 280.8 17.8 281.8 C16.8 282.8 17.2 284.6 18.6 284.8 C17.6 286.2 15.8 284.6 14.4 282.4 Z" fill="#40405a"/>
<!-- rectangle -->
<rect x="9.6" y="306.6" width="11" height="11" fill="url(#hl)" stroke="#50507a" stroke-width="1.1"/>
<!-- ellipse -->
<circle cx="15" cy="340" r="5.6" fill="url(#hl)" stroke="#50507a" stroke-width="1.1"/>
<!-- polygon -->
<path d="M8.4 368 L11.6 362.4 H18.6 L21.6 368 L18.6 373.6 H11.6 Z" fill="url(#hl)" stroke="#60608a" stroke-width="1.1"/>
<!-- text A -->
<path d="M8.6 410.2 L13.2 396.8 H16.8 L21.4 410.2 H18.2 L17.2 407 H12.8 L11.8 410.2 Z M13.6 404.4 H16.4 L15 399.8 Z" fill="#ececf8" stroke="#74749c" stroke-width="0.9" fill-rule="evenodd"/>
<!-- dimension -->
<path d="M10.4 443.4 L19.4 434.4" stroke="#202038" stroke-width="1.3"/>
<path d="M8.2 442 L11.8 445.5 M17.9 432.2 L21.6 435.8" stroke="#202038" stroke-width="1.5"/>
<path d="M9.6 444.2 L10.8 440.6 L13.2 443 Z M20.2 433.6 L19 437.2 L16.6 434.8 Z" fill="#202038"/>
<!-- connector -->
<path d="M12 463.6 L17.4 470.4" stroke="#50507a" stroke-width="1.2"/>
<rect x="10.5" y="459.6" width="4" height="4" fill="url(#cg)" stroke="#62628c" stroke-width="1"/>
<rect x="15.5" y="470.4" width="4" height="4" fill="url(#cg)" stroke="#62628c" stroke-width="1"/>
<!-- shadow -->
<rect x="10.4" y="500.6" width="9.6" height="9.2" fill="#8484ac"/>
<rect x="8.6" y="498.6" width="9" height="8.8" fill="url(#hl)" stroke="#50507a" stroke-width="1.1"/>
<!-- transparency -->
<path d="M12.6 524 L19.6 528.2 C18 531.4 13.6 531.4 12 528.8 C11.4 527.2 11.8 525.4 12.6 524 Z" fill="#f4f4fa" stroke="#60608a" stroke-width="1"/>
<path d="M12 527.6 L19.2 528.6 C17.6 531.2 13.8 531.2 12.2 528.8 Z" fill="#203060"/>
<path d="M13.8 530.4 L9.6 534.4 M7.6 532.2 L11.6 536.2" stroke="#60608a" stroke-width="1.1"/>
<path d="M19.5 531.4 L23.2 538.6 H15.8 Z" fill="url(#tg)"/>
<!-- eyedropper -->
<rect x="7" y="567" width="8" height="8" fill="#f08000"/>
<path d="M7 567 H9 V569 H7 Z M11 567 H13 V569 H11 Z M9 569 H11 V571 H9 Z M13 569 H15 V571 H13 Z M7 573 H9 V575 H7 Z M11 573 H13 V575 H11 Z M13 571 H15 V573 H13Z" fill="#d06000"/>
<rect x="9" y="571" width="2" height="3" fill="#fff0d8"/>
<path d="M11.4 570.8 L17.6 564.2 L19 565.6 L12.6 572 Z" fill="#70708c" stroke="#30304a" stroke-width="0.8"/>
<path d="M16.4 562.6 L20.4 566.8" stroke="#20203a" stroke-width="2"/>
<path d="M18 564.2 L21.6 560.4" stroke="#20203a" stroke-width="3" stroke-linecap="round"/>
<!-- fill -->
<path d="M13.2 588.6 L17.6 593 L13.2 597.4 L8.8 593 Z" fill="#fff" stroke="#50507a" stroke-width="1"/>
<path d="M9.6 593.4 H16.8 L13.2 597 Z" fill="#f08800"/>
<path d="M12 590.4 L14.6 587.6 M13.6 590.6 L11.4 587.8" stroke="#50507a" stroke-width="1"/>
<path d="M17.8 595.6 L21.6 602.8 H14 Z" fill="url(#og)"/>
<!-- smart fill -->
<path d="M11 615.4 L15.4 619.8 L11 624.2 L6.6 619.8 Z" fill="#fff" stroke="#50507a" stroke-width="1"/>
<path d="M7.4 620.2 H14.6 L11 623.8 Z" fill="#f08800"/>
<path d="M9.8 617.2 L12.4 614.4 M11.4 617.4 L9.2 614.6" stroke="#50507a" stroke-width="1"/>
<rect x="15.6" y="623.6" width="7" height="5" fill="#fff" stroke="#50507a" stroke-width="1"/>
<rect x="13.6" y="625.6" width="7" height="5" fill="#fff" stroke="#50507a" stroke-width="1"/>
<path d="M15.8 620.4 V627.2 H20" fill="none" stroke="#f08000" stroke-width="1.6"/>
<!-- plus -->
<circle cx="15" cy="665.8" r="8" fill="none" stroke="#cccccc" stroke-width="1"/>
<path d="M9.6 665.8 H20.4 M15 660.4 V671.2" stroke="#b9b9b9" stroke-width="1.8"/>
</svg>
<!-- ===== RULERS ===== -->
<svg style="left:0;top:0;" width="1920" height="1080" viewBox="0 0 1920 1080" shape-rendering="crispEdges"><path d="M56 149h1v1h-1zM68 149h1v1h-1zM79 148h1v2h-1zM91 149h1v1h-1zM102 149h1v1h-1zM114 149h1v1h-1zM126 149h1v1h-1zM137 145h1v5h-1zM149 149h1v1h-1zM160 149h1v1h-1zM172 149h1v1h-1zM183 149h1v1h-1zM195 148h1v2h-1zM206 149h1v1h-1zM218 149h1v1h-1zM229 149h1v1h-1zM241 149h1v1h-1zM252 145h1v5h-1zM264 149h1v1h-1zM275 149h1v1h-1zM287 149h1v1h-1zM298 149h1v1h-1zM310 148h1v2h-1zM321 149h1v1h-1zM333 149h1v1h-1zM344 149h1v1h-1zM356 149h1v1h-1zM367 145h1v5h-1zM379 149h1v1h-1zM390 149h1v1h-1zM402 149h1v1h-1zM413 149h1v1h-1zM425 148h1v2h-1zM436 149h1v1h-1zM448 149h1v1h-1zM459 149h1v1h-1zM471 149h1v1h-1zM482 145h1v5h-1zM494 149h1v1h-1zM505 149h1v1h-1zM517 149h1v1h-1zM528 149h1v1h-1zM540 148h1v2h-1zM552 149h1v1h-1zM563 149h1v1h-1zM575 149h1v1h-1zM586 149h1v1h-1zM598 145h1v5h-1zM609 149h1v1h-1zM621 149h1v1h-1zM632 149h1v1h-1zM644 149h1v1h-1zM655 148h1v2h-1zM667 149h1v1h-1zM678 149h1v1h-1zM690 149h1v1h-1zM701 149h1v1h-1zM713 145h1v5h-1zM724 149h1v1h-1zM736 149h1v1h-1zM747 149h1v1h-1zM759 149h1v1h-1zM770 148h1v2h-1zM782 149h1v1h-1zM793 149h1v1h-1zM805 149h1v1h-1zM816 149h1v1h-1zM828 145h1v5h-1zM839 149h1v1h-1zM851 149h1v1h-1zM862 149h1v1h-1zM874 149h1v1h-1zM885 148h1v2h-1zM897 149h1v1h-1zM908 149h1v1h-1zM920 149h1v1h-1zM931 149h1v1h-1zM943 145h1v5h-1zM954 149h1v1h-1zM966 149h1v1h-1zM978 149h1v1h-1zM989 149h1v1h-1zM1001 148h1v2h-1zM1012 149h1v1h-1zM1024 149h1v1h-1zM1035 149h1v1h-1zM1047 149h1v1h-1zM1058 145h1v5h-1zM1070 149h1v1h-1zM1081 149h1v1h-1zM1093 149h1v1h-1zM1104 149h1v1h-1zM1116 148h1v2h-1zM1127 149h1v1h-1zM1139 149h1v1h-1zM1150 149h1v1h-1zM1162 149h1v1h-1zM1173 145h1v5h-1zM1185 149h1v1h-1zM1196 149h1v1h-1zM1208 149h1v1h-1zM1219 149h1v1h-1zM1231 148h1v2h-1zM1242 149h1v1h-1zM1254 149h1v1h-1zM1265 149h1v1h-1zM1277 149h1v1h-1zM1288 145h1v5h-1zM1300 149h1v1h-1zM1311 149h1v1h-1zM1323 149h1v1h-1zM1334 149h1v1h-1zM1346 148h1v2h-1zM1357 149h1v1h-1zM1369 149h1v1h-1zM1380 149h1v1h-1zM1392 149h1v1h-1zM1404 145h1v5h-1zM1415 149h1v1h-1zM1427 149h1v1h-1zM1438 149h1v1h-1zM1450 149h1v1h-1zM1461 148h1v2h-1zM1473 149h1v1h-1zM1484 149h1v1h-1zM1496 149h1v1h-1zM1507 149h1v1h-1zM1519 145h1v5h-1zM1530 149h1v1h-1zM1542 149h1v1h-1zM1553 149h1v1h-1zM1565 149h1v1h-1zM1576 148h1v2h-1zM1588 149h1v1h-1zM1599 149h1v1h-1zM1611 149h1v1h-1zM1622 149h1v1h-1zM1634 145h1v5h-1zM1645 149h1v1h-1zM1657 149h1v1h-1zM1668 149h1v1h-1zM1680 149h1v1h-1zM1691 148h1v2h-1zM1703 149h1v1h-1zM1714 149h1v1h-1zM1726 149h1v1h-1zM1737 149h1v1h-1zM1749 145h1v5h-1zM1760 149h1v1h-1zM1772 149h1v1h-1zM1783 149h1v1h-1zM1795 149h1v1h-1zM1806 148h1v2h-1zM1818 149h1v1h-1zM1830 149h1v1h-1zM1841 149h1v1h-1zM1853 149h1v1h-1zM1864 145h1v5h-1zM46 1015h1v1h-1zM46 1003h1v1h-1zM46 992h1v1h-1zM45 980h2v1h-2zM46 969h1v1h-1zM46 957h1v1h-1zM46 946h1v1h-1zM46 934h1v1h-1zM42 923h5v1h-5zM46 911h1v1h-1zM46 900h1v1h-1zM46 888h1v1h-1zM46 876h1v1h-1zM45 865h2v1h-2zM46 853h1v1h-1zM46 842h1v1h-1zM46 830h1v1h-1zM46 819h1v1h-1zM42 807h5v1h-5zM46 796h1v1h-1zM46 784h1v1h-1zM46 773h1v1h-1zM46 761h1v1h-1zM45 750h2v1h-2zM46 738h1v1h-1zM46 727h1v1h-1zM46 715h1v1h-1zM46 704h1v1h-1zM42 692h5v1h-5zM46 681h1v1h-1zM46 669h1v1h-1zM46 658h1v1h-1zM46 646h1v1h-1zM45 635h2v1h-2zM46 623h1v1h-1zM46 612h1v1h-1zM46 600h1v1h-1zM46 589h1v1h-1zM42 577h5v1h-5zM46 566h1v1h-1zM46 554h1v1h-1zM46 543h1v1h-1zM46 531h1v1h-1zM45 520h2v1h-2zM46 508h1v1h-1zM46 496h1v1h-1zM46 485h1v1h-1zM46 473h1v1h-1zM42 462h5v1h-5zM46 450h1v1h-1zM46 439h1v1h-1zM46 427h1v1h-1zM46 416h1v1h-1zM45 404h2v1h-2zM46 393h1v1h-1zM46 381h1v1h-1zM46 370h1v1h-1zM46 358h1v1h-1zM42 347h5v1h-5zM46 335h1v1h-1zM46 324h1v1h-1zM46 312h1v1h-1zM46 301h1v1h-1zM45 289h2v1h-2zM46 278h1v1h-1zM46 266h1v1h-1zM46 255h1v1h-1zM46 243h1v1h-1zM42 232h5v1h-5zM46 220h1v1h-1zM46 209h1v1h-1zM46 197h1v1h-1zM46 186h1v1h-1zM45 174h2v1h-2zM46 163h1v1h-1z" fill="#6a6a6a"/><path d="M1032 135h1v3h-1zM1032 141h1v3h-1zM1032 147h1v3h-1zM32 357h3v1h-3zM38 357h3v1h-3zM44 357h3v1h-3z" fill="#000"/><path d="M38 139h1v2h-1zM38 143h1v2h-1zM38 147h1v2h-1zM36 141h2v1h-2zM40 141h2v1h-2zM44 141h2v1h-2z" fill="#000"/></svg>
<svg style="left:34px;top:136px;" width="14" height="14" viewBox="34 136 14 14"><path d="M40.3 143.3 L44.6 147.6" stroke="#000" stroke-width="1" fill="none"/><path d="M45.6 148.6 L42 147.8 L44.8 145 Z" fill="#000"/></svg>
<div class="t rl" style="left:117.7px;top:134px;width:40px;text-align:center;">250</div>
<div class="t rl" style="left:232.7px;top:134px;width:40px;text-align:center;">200</div>
<div class="t rl" style="left:347.7px;top:134px;width:40px;text-align:center;">150</div>
<div class="t rl" style="left:462.7px;top:134px;width:40px;text-align:center;">100</div>
<div class="t rl" style="left:578.7px;top:134px;width:40px;text-align:center;">50</div>
<div class="t rl" style="left:693.7px;top:134px;width:40px;text-align:center;">0</div>
<div class="t rl" style="left:808.7px;top:134px;width:40px;text-align:center;">50</div>
<div class="t rl" style="left:923.7px;top:134px;width:40px;text-align:center;">100</div>
<div class="t rl" style="left:1038.7px;top:134px;width:40px;text-align:center;">150</div>
<div class="t rl" style="left:1153.7px;top:134px;width:40px;text-align:center;">200</div>
<div class="t rl" style="left:1268.7px;top:134px;width:40px;text-align:center;">250</div>
<div class="t rl" style="left:1384.7px;top:134px;width:40px;text-align:center;">300</div>
<div class="t rl" style="left:1499.7px;top:134px;width:40px;text-align:center;">350</div>
<div class="t rl" style="left:1614.7px;top:134px;width:40px;text-align:center;">400</div>
<div class="t rl" style="left:1729.7px;top:134px;width:40px;text-align:center;">450</div>
<div class="t rl" style="left:17px;top:915.0px;width:40px;text-align:center;transform-origin:20px 7px;transform:rotate(-90deg);">0</div>
<div class="t rl" style="left:17px;top:799.0px;width:40px;text-align:center;transform-origin:20px 7px;transform:rotate(-90deg);">50</div>
<div class="t rl" style="left:17px;top:684.0px;width:40px;text-align:center;transform-origin:20px 7px;transform:rotate(-90deg);">100</div>
<div class="t rl" style="left:17px;top:569.0px;width:40px;text-align:center;transform-origin:20px 7px;transform:rotate(-90deg);">150</div>
<div class="t rl" style="left:17px;top:454.0px;width:40px;text-align:center;transform-origin:20px 7px;transform:rotate(-90deg);">200</div>
<div class="t rl" style="left:17px;top:339.0px;width:40px;text-align:center;transform-origin:20px 7px;transform:rotate(-90deg);">250</div>
<div class="t rl" style="left:17px;top:224.0px;width:40px;text-align:center;transform-origin:20px 7px;transform:rotate(-90deg);">300</div>
<div class="t rl" style="left:1832.6px;top:133.7px;font-size:9.5px;letter-spacing:0.27px;">milimetry</div>
<div class="t rl" style="left:12.5px;top:993px;width:50px;text-align:center;transform-origin:25px 7px;transform:rotate(-90deg);font-size:9.5px;letter-spacing:0.27px;">milimetry</div>
<!-- ===== RIGHT STRIPS ===== -->
<div class="a" style="left:1877px;top:113px;width:5px;height:931px;background:#fff;"></div>
<div class="a" style="left:1879px;top:115px;width:1px;height:927px;background:#d4d4d4;"></div>
<div class="a" style="left:1882px;top:113px;width:19px;height:931px;background:#e9e9e9;"></div>
<div class="a" style="left:1882px;top:132px;width:19px;height:147px;background:#b4b4b4;"></div>
<div class="a" style="left:1901px;top:113px;width:1px;height:931px;background:#fff;"></div>
<div class="a" style="left:1902px;top:113px;width:18px;height:931px;background:#f3f3f3;"></div>
<!-- ===== STATUS BAR ===== -->
<div class="hs" style="left:0;top:1044px;width:1920px;background:#d9d9d9;"></div>
<div class="a" style="left:0;top:1045px;width:1920px;height:33px;background:#f3f3f3;"></div>
<div class="a" style="left:0;top:1077px;width:1920px;height:1px;background:#fbfbfb;"></div>
<div class="a" style="left:0;top:1078px;width:1920px;height:2px;background:#000;"></div>
<div class="a" style="left:490px;top:1078px;width:48px;height:2px;background:#3c3c3c;"></div>
<!-- ===== PALETTE ===== -->
<div class="a" style="left:1902px;top:166px;width:18px;height:839px;background:#505052;overflow:hidden;"><div class="a" style="left:1px;top:1px;width:16px;height:16px;background:#fff;"></div><div class="a" style="left:1px;top:18px;width:16px;height:16px;background:#141616;"></div><div class="a" style="left:1px;top:35px;width:16px;height:16px;background:#323232;"></div><div class="a" style="left:1px;top:52px;width:16px;height:16px;background:#4e4e4e;"></div><div class="a" style="left:1px;top:69px;width:16px;height:16px;background:#686868;"></div><div class="a" style="left:1px;top:86px;width:16px;height:16px;background:#828282;"></div><div class="a" style="left:1px;top:103px;width:16px;height:16px;background:#9a9a9a;"></div><div class="a" style="left:1px;top:120px;width:16px;height:16px;background:#b0b0b0;"></div><div class="a" style="left:1px;top:137px;width:16px;height:16px;background:#c6c6c6;"></div><div class="a" style="left:1px;top:154px;width:16px;height:16px;background:#dadada;"></div><div class="a" style="left:1px;top:171px;width:16px;height:16px;background:#ececec;"></div><div class="a" style="left:1px;top:188px;width:16px;height:16px;background:#ffffff;"></div><div class="a" style="left:1px;top:205px;width:16px;height:16px;background:#3c2c98;"></div><div class="a" style="left:1px;top:222px;width:16px;height:16px;background:#00a4d8;"></div><div class="a" style="left:1px;top:239px;width:16px;height:16px;background:#00a85c;"></div><div class="a" style="left:1px;top:256px;width:16px;height:16px;background:#fce414;"></div><div class="a" style="left:1px;top:273px;width:16px;height:16px;background:#dc2c1c;"></div><div class="a" style="left:1px;top:290px;width:16px;height:16px;background:#e4007c;"></div><div class="a" style="left:1px;top:307px;width:16px;height:16px;background:#ac4890;"></div><div class="a" style="left:1px;top:324px;width:16px;height:16px;background:#f48000;"></div><div class="a" style="left:1px;top:341px;width:16px;height:16px;background:#ffbcc0;"></div><div class="a" style="left:1px;top:358px;width:16px;height:16px;background:#7c6c68;"></div><div class="a" style="left:1px;top:375px;width:16px;height:16px;background:#dcd8f4;"></div><div class="a" style="left:1px;top:392px;width:16px;height:16px;background:#b0a4e0;"></div><div class="a" style="left:1px;top:409px;width:16px;height:16px;background:#7c98d4;"></div><div class="a" style="left:1px;top:426px;width:16px;height:16px;background:#8878c8;"></div><div class="a" style="left:1px;top:443px;width:16px;height:16px;background:#9890b8;"></div><div class="a" style="left:1px;top:460px;width:16px;height:16px;background:#506490;"></div><div class="a" style="left:1px;top:477px;width:16px;height:16px;background:#58546c;"></div><div class="a" style="left:1px;top:494px;width:16px;height:16px;background:#7084a0;"></div><div class="a" style="left:1px;top:511px;width:16px;height:16px;background:#0094cc;"></div><div class="a" style="left:1px;top:528px;width:16px;height:16px;background:#acdcf0;"></div><div class="a" style="left:1px;top:545px;width:16px;height:16px;background:#b8ccd8;"></div><div class="a" style="left:1px;top:562px;width:16px;height:16px;background:#90a0a8;"></div><div class="a" style="left:1px;top:579px;width:16px;height:16px;background:#6c7880;"></div><div class="a" style="left:1px;top:596px;width:16px;height:16px;background:#444c50;"></div><div class="a" style="left:1px;top:613px;width:16px;height:16px;background:#507070;"></div><div class="a" style="left:1px;top:630px;width:16px;height:16px;background:#488878;"></div><div class="a" style="left:1px;top:647px;width:16px;height:16px;background:#709894;"></div><div class="a" style="left:1px;top:664px;width:16px;height:16px;background:#60b0a0;"></div><div class="a" style="left:1px;top:681px;width:16px;height:16px;background:#68a87c;"></div><div class="a" style="left:1px;top:698px;width:16px;height:16px;background:#80d8dc;"></div><div class="a" style="left:1px;top:715px;width:16px;height:16px;background:#60b0b8;"></div><div class="a" style="left:1px;top:732px;width:16px;height:16px;background:#b8ccbc;"></div><div class="a" style="left:1px;top:749px;width:16px;height:16px;background:#dcf8dc;"></div><div class="a" style="left:1px;top:766px;width:16px;height:16px;background:#b4f0c0;"></div><div class="a" style="left:1px;top:783px;width:16px;height:16px;background:#90a098;"></div><div class="a" style="left:1px;top:800px;width:16px;height:16px;background:#949c7c;"></div><div class="a" style="left:1px;top:817px;width:16px;height:16px;background:#c0c478;"></div><div class="a" style="left:1px;top:834px;width:16px;height:16px;background:#b8c89c;"></div></div>
<svg style="left:1903px;top:167px;" width="16" height="16" viewBox="0 0 16 16"><path d="M0.5 0.5 L15.5 15.5 M15.5 0.5 L0.5 15.5" stroke="#000" stroke-width="1" fill="none"/></svg>
<!-- ===== RIGHT SIDE ICONS ===== -->
<svg style="left:1856px;top:112px;" width="64" height="960" viewBox="1856 112 64 960">
<!-- scrollbar arrows -->
<path d="M1864 164 V161.6 L1867.8 157.8 L1871.6 161.6 V164 L1867.8 160.4 Z" fill="#444"/>
<path d="M1864 996.2 V998.6 L1867.6 1002.2 L1871.2 998.6 V996.2 L1867.6 999.8 Z" fill="#444"/>
<path d="M1848 1012 H1850.4 L1854 1015.5 L1850.4 1019 H1848 L1851.4 1015.5 Z" fill="#444"/>
<!-- docker close x -->
<path d="M1888.2 118.2 L1894.8 124.8 M1894.8 118.2 L1888.2 124.8" stroke="#b4b4b4" stroke-width="1.1" fill="none"/>
<!-- object manager icon -->
<g>
<path d="M1885.5 140 V151 M1891.5 141.5 V151" stroke="#fff" stroke-width="1" stroke-dasharray="1 1"/>
<path d="M1886.5 138.5 H1889" stroke="#46467a" stroke-width="1"/>
<circle cx="1885.4" cy="138.5" r="1.3" fill="#fff" stroke="#46467a" stroke-width="1"/>
<rect x="1889.3" y="136.3" width="3.6" height="4.4" fill="#d8d8f0" stroke="#46467a" stroke-width="1"/>
<path d="M1891 142 C1893.4 143.4 1889.6 145 1891.6 146.4 C1893.6 147.8 1889.8 149 1891.6 150.6" fill="none" stroke="#000" stroke-width="1.1"/>
<path d="M1892.6 140.6 H1895 M1892.6 149.6 H1895 M1892.6 145 H1894" stroke="#fff" stroke-width="1" stroke-dasharray="1 1"/>
<circle cx="1896.6" cy="140.4" r="1.3" fill="#fff" stroke="#46467a" stroke-width="1"/>
<rect x="1894.4" y="143.2" width="4.4" height="3.4" fill="#d8d8f0" stroke="#46467a" stroke-width="1"/>
<circle cx="1896.6" cy="149.6" r="1.3" fill="#fff" stroke="#46467a" stroke-width="1"/>
</g>
<!-- docker plus -->
<circle cx="1891.5" cy="305.2" r="8" fill="none" stroke="#cccccc" stroke-width="1"/>
<path d="M1886.1 305.2 H1896.9 M1891.5 299.8 V310.6" stroke="#b9b9b9" stroke-width="1.8"/>
<!-- palette top controls -->
<path d="M1905 118.5h1.6v1h-1.6zM1909 118.5h1.6v1h-1.6zM1913 118.5h1.6v1h-1.6z" fill="#a8a8a8"/>
<path d="M1908 122.8 L1913.4 127.6 L1908 132.4 Z" fill="#000"/>
<g fill="#c4c4c4">
<path d="M1904.8 148.2 L1911.2 141.2 L1913.6 143.6 L1906.6 149.8 Z"/>
<path d="M1910 140 L1914.8 144.8" stroke="#c4c4c4" stroke-width="2.2"/>
<path d="M1912.6 142 L1916 138.4" stroke="#c4c4c4" stroke-width="3.4" stroke-linecap="round"/>
</g>
<path d="M1907.2 160 L1910.6 156.2 L1914 160" fill="none" stroke="#d2d2d2" stroke-width="1.1"/>
<!-- palette bottom controls -->
<path d="M1907.2 1011.2 L1910.6 1015 L1914 1011.2" fill="none" stroke="#b4b4b4" stroke-width="1.3"/>
<path d="M1908 1026.4 L1910.6 1029 L1908 1031.6 M1911.4 1026.4 L1914 1029 L1911.4 1031.6" fill="none" stroke="#b4b4b4" stroke-width="1"/>
<!-- doc palette right controls -->
<path d="M1859.4 1032 L1861.9 1034.5 L1859.4 1037 M1862.6 1032 L1865.1 1034.5 L1862.6 1037" fill="none" stroke="#bcbcbc" stroke-width="0.9"/>
</svg>
<svg style="left:1840px;top:1026px;" width="20" height="18" viewBox="1840 1026 20 18"><path d="M1843.4 1030.6 L1847.8 1034.7 L1843.4 1038.8" fill="none" stroke="#d6d6d6" stroke-width="1.3"/></svg>
<!-- zoom icon near scrollbars -->
<svg style="left:1860px;top:1008px;" width="16" height="16" viewBox="1860 1008 16 16">
<circle cx="1866.9" cy="1015" r="4.3" fill="#fff" stroke="#3c3c5e" stroke-width="1.2"/>
<circle cx="1866.9" cy="1015" r="1.9" fill="none" stroke="#3c3c5e" stroke-width="1" stroke-dasharray="1.5 1.5"/>

<path d="M1870.2 1018.4 L1874 1022.2" stroke="#30304a" stroke-width="1.9"/>
</svg>
<!-- ===== NAV / DOC PALETTE ICONS ===== -->
<svg style="left:30px;top:1007px;" width="960" height="38" viewBox="30 1007 960 38">
<!-- add page icons -->
<g fill="#fff" stroke="#000" stroke-width="1.3">
<path d="M52.6 1009.8 H57.4 L60.4 1012.8 V1020.4 H52.6 Z"/>
<path d="M192.4 1009.8 H197.2 L200.2 1012.8 V1020.4 H192.4 Z"/>
</g>
<path d="M57.2 1009.8 V1013 H60.4" fill="none" stroke="#000" stroke-width="1"/>
<path d="M197 1009.8 V1013 H200.2" fill="none" stroke="#000" stroke-width="1"/>
<path d="M54.4 1016.6 H58.8 M56.6 1014.4 V1018.8 M194.2 1016.6 H198.6 M196.4 1014.4 V1018.8" stroke="#000" stroke-width="1.2"/>
<!-- nav arrows -->
<g fill="#828282">
<rect x="70" y="1011" width="1.2" height="9"/>
<path d="M77.4 1011 V1020 L72 1015.5 Z"/>
<path d="M94.2 1011 V1020 L88.8 1015.5 Z"/>
<path d="M160.8 1011 V1020 L166.2 1015.5 Z"/>
<path d="M175.8 1011 V1020 L181.2 1015.5 Z"/>
<rect x="182" y="1011" width="1.2" height="9"/>
</g>
<!-- splitter grip -->
<path d="M958.5 1011.5h1v1h-1zM958.5 1015.5h1v1h-1zM958.5 1019.5h1v1h-1z" fill="#b4b4b4"/>
<!-- scroll left arrow -->
<path d="M975 1012 H972.6 L969 1015.5 L972.6 1019 H975 L971.6 1015.5 Z" fill="#444"/>
<!-- doc palette -->
<path d="M34.5 1029.5h1v1h-1zM34.5 1033.5h1v1h-1zM34.5 1037.5h1v1h-1z" fill="#b4b4b4"/>
<path d="M41.8 1030 L47.2 1034.6 L41.8 1039.2 Z" fill="#000"/>
<path d="M54.4 1041 L60.4 1034.8 L61.4 1035.8 L55.4 1041.8 Z" fill="#6a9c9c" stroke="#486c70" stroke-width="0.7"/>
<path d="M59.4 1033 L63.2 1036.8" stroke="#2c2c44" stroke-width="2"/>
<path d="M61.2 1034.6 L64.8 1030.8" stroke="#2c2c44" stroke-width="3" stroke-linecap="round"/>
<path d="M76.6 1031.2 L72.4 1035.2 L76.6 1039.2" fill="none" stroke="#d4d4d4" stroke-width="1.4"/>
<rect x="83.5" y="1026.5" width="17" height="17" fill="#fff" stroke="#505050" stroke-width="1"/>
<path d="M84.8 1027.8 L99.2 1042.2 M99.2 1027.8 L84.8 1042.2" stroke="#000" stroke-width="1" fill="none"/>
</svg>
<!-- tab plus -->
<svg style="left:116px;top:113px;" width="19" height="19" viewBox="116 113 19 19"><path d="M120.4 122.2 H130.8 M125.6 117 V127.4" stroke="#aaaaaa" stroke-width="1.7" fill="none"/></svg>
<!-- ===== STATUS BAR ICONS ===== -->
<div class="vs" style="left:1698px;top:1050px;height:22px;"></div>
<svg style="left:100px;top:1045px;" width="1820" height="33" viewBox="100 1045 1820 33">
<rect x="112.5" y="1054.5" width="13" height="13" fill="#fff" stroke="#000" stroke-width="1.2"/>
<path d="M117 1057 L122.2 1061.3 L117 1065.6 Z" fill="#000"/>
<!-- proof monitor -->
<rect x="1466.8" y="1054.6" width="13.6" height="11.8" rx="1.4" fill="#fff" stroke="#6a6aa0" stroke-width="1.2"/>
<rect x="1468.4" y="1056.2" width="10.4" height="3" fill="#c8949c"/>
<rect x="1468.4" y="1059.2" width="10.4" height="3" fill="#5c8c52"/>
<rect x="1468.4" y="1062.2" width="10.4" height="2.8" fill="#8aa8d8"/>
<circle cx="1473.6" cy="1060.6" r="2.7" fill="#fff" stroke="#20203a" stroke-width="1.3"/>
<path d="M1469 1068.6 H1478.2" stroke="#7070a4" stroke-width="1.1"/>
<!-- bucket -->
<path d="M1501.8 1055.6 L1508 1062 L1501.8 1068.4 L1495.4 1062 Z" fill="#fff" stroke="#60608a" stroke-width="1.2" stroke-linejoin="round"/>
<path d="M1496.6 1063.2 H1507 L1501.8 1068 Z" fill="#f08000"/>
<path d="M1500.2 1054.4 L1503.4 1058.6 M1503.6 1054.4 L1502.6 1060.6" stroke="#60608a" stroke-width="1" fill="none"/>
<circle cx="1502.6" cy="1060.8" r="0.9" fill="#50507a"/>
<path d="M1507.4 1061 C1509.2 1060.6 1509.8 1062 1509.6 1066.6" fill="none" stroke="#f08000" stroke-width="1.5"/>
<!-- fill none swatch -->
<rect x="1516.5" y="1052.5" width="17" height="17" fill="#fff" stroke="#909090" stroke-width="1"/>
<path d="M1517.4 1053.4 L1532.6 1068.6 M1532.6 1053.4 L1517.4 1068.6" stroke="#000" stroke-width="1" fill="none"/>
<!-- pen nib -->
<path d="M1711.9 1054.2 C1710.6 1057.4 1708.8 1061.2 1708.8 1063.2 L1710.6 1065.8 H1713.2 L1715 1063.2 C1715 1061.2 1713.2 1057.4 1711.9 1054.2 Z" fill="#f0f0fa" stroke="#6a6aa0" stroke-width="1"/>
<path d="M1711.9 1056.4 V1062" stroke="#9c9cc4" stroke-width="0.9"/>
<circle cx="1711.9" cy="1062.4" r="0.8" fill="#6a6aa0"/>
<rect x="1708" y="1067" width="8" height="1.8" fill="#20203a"/>
<!-- outline swatch -->
<rect x="1725.5" y="1052.5" width="17" height="17" fill="#161816" stroke="#a0a0a0" stroke-width="1"/>
</svg>
<!-- ===== TEXTS ===== -->
<div class="t" style="left:21.22px;top:2.84px;font-size:12px;color:#000;transform:scaleX(0.9545);">CorelDRAW X7 (64 bity) - Beznazwy-1</div>
<div class="t" style="left:8.97px;top:23.84px;font-size:12px;color:#000;transform:scaleX(0.9983);"><u>P</u>lik</div>
<div class="t" style="left:45.92px;top:23.84px;font-size:12px;color:#000;transform:scaleX(0.9564);"><u>E</u>dycja</div>
<div class="t" style="left:97.52px;top:23.84px;font-size:12px;color:#000;transform:scaleX(1.0575);"><u>W</u>idok</div>
<div class="t" style="left:149.92px;top:23.84px;font-size:12px;color:#000;transform:scaleX(0.9828);"><u>U</u>kład</div>
<div class="t" style="left:197.52px;top:23.84px;font-size:12px;color:#000;transform:scaleX(1.0338);"><u>O</u>biekt</div>
<div class="t" style="left:251.32px;top:23.84px;font-size:12px;color:#000;transform:scaleX(0.9551);">Efe<u>k</u>ty</div>
<div class="t" style="left:300.72px;top:23.84px;font-size:12px;color:#000;transform:scaleX(1.0354);"><u>M</u>apy bitowe</div>
<div class="t" style="left:387.72px;top:23.84px;font-size:12px;color:#000;transform:scaleX(0.9909);"><u>T</u>ekst</div>
<div class="t" style="left:433.62px;top:23.84px;font-size:12px;color:#000;transform:scaleX(0.9713);"><u>T</u>abela</div>
<div class="t" style="left:486.72px;top:23.84px;font-size:12px;color:#000;transform:scaleX(0.9543);"><u>N</u>arzędzia</div>
<div class="t" style="left:555.72px;top:23.84px;font-size:12px;color:#000;transform:scaleX(1.0269);"><u>O</u>kno</div>
<div class="t" style="left:602.92px;top:23.84px;font-size:12px;color:#000;transform:scaleX(1.0321);">Pomo<u>c</u></div>
<div class="t" style="left:442.62px;top:49.84px;font-size:12px;color:#000;transform:scaleX(0.9513);">61%</div>
<div class="t" style="left:657.82px;top:49.84px;font-size:12px;color:#000;transform:scaleX(0.9752);">Przyciągaj do</div>
<div class="t" style="left:32.62px;top:76.84px;font-size:12px;color:#000;transform:scaleX(0.8604);">X:</div>
<div class="t" style="left:32.62px;top:92.84px;font-size:12px;color:#000;transform:scaleX(0.9132);">Y:</div>
<div class="t" style="left:47.62px;top:76.84px;font-size:12px;color:#000;transform:scaleX(0.9738);">91,323 mm</div>
<div class="t" style="left:47.62px;top:92.84px;font-size:12px;color:#000;transform:scaleX(0.9619);">244,243 mm</div>
<div class="t" style="left:163.92px;top:76.84px;font-size:12px;color:#000;transform:scaleX(0.9638);">23,448 mm</div>
<div class="t" style="left:163.92px;top:92.84px;font-size:12px;color:#000;transform:scaleX(0.9638);">67,737 mm</div>
<div class="t" style="left:255.82px;top:76.84px;font-size:12px;color:#000;transform:scaleX(0.8977);">125,6</div>
<div class="t" style="left:255.82px;top:92.84px;font-size:12px;color:#000;transform:scaleX(0.8977);">100,0</div>
<div class="t" style="left:296.64px;top:77.15px;font-size:14px;color:#565c6c;transform:scaleX(0.7805);">%</div>
<div class="t" style="left:296.64px;top:93.15px;font-size:14px;color:#565c6c;transform:scaleX(0.7805);">%</div>
<div class="t" style="left:363.92px;top:84.84px;font-size:12px;color:#000;transform:scaleX(0.9175);">0,0</div>
<div class="t" style="left:592.62px;top:76.84px;font-size:12px;color:#000;transform:scaleX(0.9936);">0,0 mm</div>
<div class="t" style="left:592.62px;top:92.84px;font-size:12px;color:#000;transform:scaleX(0.9936);">0,0 mm</div>
<div class="t" style="left:728.02px;top:76.84px;font-size:12px;color:#000;transform:scaleX(0.9924);">0,0 mm</div>
<div class="t" style="left:728.02px;top:92.84px;font-size:12px;color:#000;transform:scaleX(0.9924);">0,0 mm</div>
<div class="t" style="left:869.52px;top:84.84px;font-size:12px;color:#000;transform:scaleX(1.0086);">0,2 mm</div>
<div class="t" style="left:32.77px;top:114.84px;font-size:12px;color:#000;transform:scaleX(0.9424);">Beznazwy-1</div>
<div class="t" style="left:115.32px;top:1008.84px;font-size:12px;color:#000;transform:scaleX(0.8518);">1 z 1</div>
<div class="t" style="left:220.77px;top:1006.84px;font-size:12px;color:#000;transform:scaleX(0.9457);">Strona 1</div>
<div class="t" style="left:5.22px;top:1053.84px;font-size:12px;color:#000;transform:scaleX(0.9063);">( 138,651; 245,546 )</div>
<div class="t" style="left:157.82px;top:1053.84px;font-size:12px;color:#000;transform:scaleX(0.9663);">Prostokąt na Warstwa 1</div>
<div class="t" style="left:745.52px;top:1026.84px;font-size:12px;color:#acacac;transform:scaleX(0.9838);font-style:italic;">Przeciągnij kolory (lub obiekty) tutaj, aby przechować odpowiednie kolory w dokumencie</div>
<div class="t" style="left:1536.82px;top:1053.84px;font-size:12px;color:#000;transform:scaleX(0.9584);">Brak</div>
<div class="t" style="left:1745.52px;top:1053.84px;font-size:12px;color:#000;transform:scaleX(0.9431);">C:0 M:0 Y:0 K:100&nbsp; 0,200 mm</div>
<div class="t" style="left:1899.16px;top:155.92px;font-size:12px;color:#000;transform:rotate(90deg) scaleX(1.0048);">Menedżer obiektów</div>
</div>
</body>
</html>
